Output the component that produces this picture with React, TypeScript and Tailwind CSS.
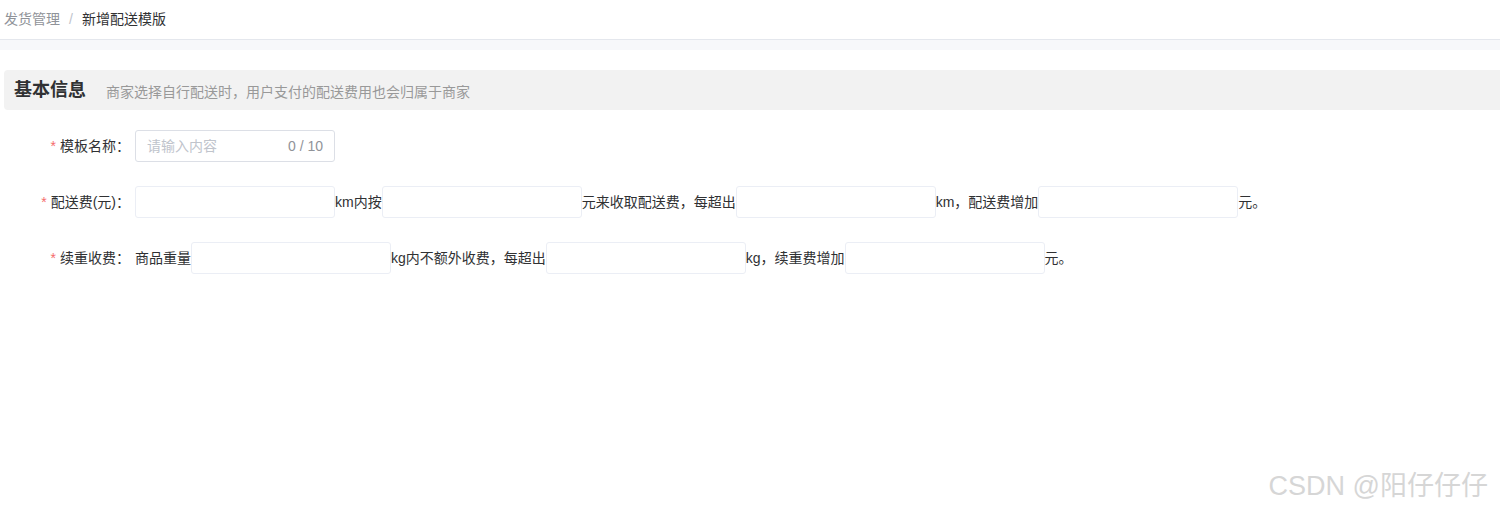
import React from 'react';

const font = { fontFamily: '"Liberation Sans", "Noto Sans CJK SC", sans-serif' };

function Box() {
  return <div className="h-8 w-[200px] shrink-0 rounded-[3px] border border-[#ebeef5] bg-white" />;
}

function Label({ children }: { children: React.ReactNode }) {
  return (
    <div className="flex w-[135px] shrink-0 justify-end pr-[5px] text-[14px] text-[#303133]">
      <span className="mr-1 text-[#f56c6c]">*</span>
      {children}
    </div>
  );
}

export default function App() {
  return (
    <div className="h-[514px] w-[1500px] bg-white text-[14px] text-[#606266]" style={font}>
      <div className="flex h-10 items-center border-b border-[#e4e7ed] px-1 text-[14px]">
        <span className="text-[#909399]">发货管理</span>
        <span className="mx-[9px] text-[#c0c4cc]">/</span>
        <span className="text-[#303133]">新增配送模版</span>
      </div>
      <div className="h-[10px] bg-[#f7f8fa]" />
      <div className="pl-1 pt-5">
        <div className="flex h-10 items-center rounded-l-[4px] bg-[#f2f2f2] pl-[10px]">
          <span className="text-[18px] font-bold text-[#303133]">基本信息</span>
          <span className="ml-5 mt-1 text-[14px] text-[#999]">商家选择自行配送时，用户支付的配送费用也会归属于商家</span>
        </div>
      </div>
      <div className="flex flex-col gap-6 pt-5">
        <div className="flex items-center">
          <Label>模板名称：</Label>
          <div className="flex h-8 w-[200px] items-center justify-between rounded-[3px] border border-[#dcdfe6] px-[11px]">
            <span className="text-[#c0c4cc]">请输入内容</span>
            <span className="text-[#909399]">0 / 10</span>
          </div>
        </div>
        <div className="flex items-center text-[#303133]">
          <Label>配送费(元)：</Label>
          <Box />
          <span>km内按</span>
          <Box />
          <span>元来收取配送费，每超出</span>
          <Box />
          <span>km，配送费增加</span>
          <Box />
          <span>元。</span>
        </div>
        <div className="flex items-center text-[#303133]">
          <div className="flex w-[135px] shrink-0 justify-end pr-[5px]">
            <span className="mr-1 text-[#f56c6c]">*</span>续重收费：
          </div>
          <span>商品重量</span>
          <Box />
          <span>kg内不额外收费，每超出</span>
          <Box />
          <span>kg，续重费增加</span>
          <Box />
          <span>元。</span>
        </div>
      </div>
      <div className="flex justify-end pr-3 pt-[192px] text-[27px] text-[#d6d6d6]">CSDN @阳仔仔仔</div>
    </div>
  );
}
